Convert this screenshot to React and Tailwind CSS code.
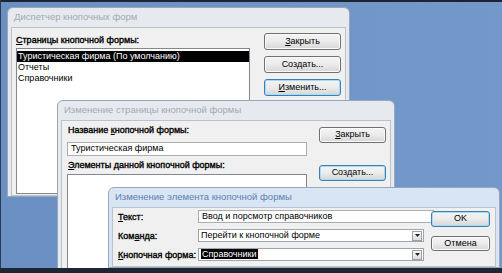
import React from "react";

const F = { fontFamily: '"Liberation Sans", Arial, sans-serif' };

function U({ children }) {
  return <span className="underline">{children}</span>;
}

const LBL = "whitespace-nowrap text-[9px] leading-[13px] text-black [-webkit-text-stroke:0.35px_#000]";

function Btn({ children, focus, className = "" }) {
  return (
    <div
      className={`flex items-center justify-center rounded-[3px] border text-[9px] text-black bg-gradient-to-b from-[#f4f4f4] via-[#ebebeb] to-[#d6d6d6] ${
        focus
          ? "border-[#3c7fb1] shadow-[inset_0_0_0_1px_#a6dcf7]"
          : "border-[#707070] shadow-[inset_0_0_0_1px_#fbfbfb]"
      } ${className}`}
    >
      <span>{children}</span>
    </div>
  );
}

function Win({ title, active, className = "", children }) {
  return (
    <div
      className={`absolute flex flex-col rounded-t-[6px] border border-[#9aa7b8] px-[3px] ${
        active ? "bg-[#d8e5f4]" : "bg-[#e6eaef]"
      } ${className}`}
    >
      <div
        className={`flex h-[19px] shrink-0 items-center whitespace-nowrap pl-[3px] text-[9.5px] ${
          active ? "text-[#5f80ad]" : "text-[#a3a9b1]"
        }`}
      >
        {title}
      </div>
      <div className="flex min-h-0 flex-1 border border-[#b9c3cf] bg-[#f0f0f0]">{children}</div>
    </div>
  );
}

function Dropdown({ children, highlight }) {
  return (
    <div className="flex h-[13px] w-[226px] items-center border border-[#9da5ad] bg-white pl-[2px] pr-[1px]">
      <div className="flex-1 whitespace-nowrap text-[9px] leading-[11px]">
        {highlight ? (
          <span className="bg-black px-[1px] text-white">{children}</span>
        ) : (
          children
        )}
      </div>
      <div className="flex h-[10px] w-[10px] items-center justify-center border border-[#a0a0a0] bg-gradient-to-b from-[#fbfbfb] to-[#dcdcdc]">
        <svg width="5" height="3" viewBox="0 0 5 3">
          <path d="M0 0H5L2.5 3Z" fill="#222" />
        </svg>
      </div>
    </div>
  );
}

export default function App() {
  return (
    <div
      style={F}
      className="relative h-[273px] w-[502px] overflow-hidden bg-gradient-to-r from-[#6a8fc2] via-[#6f95c7] to-[#7299c9]"
    >
      {/* dark edges */}
      <div className="absolute left-0 top-0 h-[2px] w-full bg-[#1d2533]" />
      <div className="absolute left-0 top-0 h-full w-[1px] bg-[#2a3a55]" />

      {/* Dialog 1 */}
      <Win title="Диспетчер кнопочных форм" className="left-[7px] top-[7px] h-[190px] w-[343px]">
        <div className="flex flex-1">
          <div className="flex flex-col pl-[4px] pt-[6px]">
            <div className={`h-[13px] ${LBL}`}>
              <U>С</U>траницы кнопочной формы:
            </div>
            <div className="mt-[1px] flex h-[146px] w-[234px] flex-col border border-[#828790] bg-white pt-[2px] text-[9px] leading-[11px] text-black">
              <div className="bg-black pl-[1px] text-white">Туристическая фирма (По умолчанию)</div>
              <div className="pl-[1px]">Отчеты</div>
              <div className="pl-[1px]">Справочники</div>
            </div>
          </div>
          <div className="ml-[14px] flex flex-col gap-[6px] pt-[5px]">
            <Btn className="h-[17px] w-[77px]">
              <U>З</U>акрыть
            </Btn>
            <Btn className="h-[17px] w-[77px]">
              Соз<U>д</U>ать...
            </Btn>
            <Btn focus className="h-[17px] w-[77px]">
              <U>И</U>зменить...
            </Btn>
          </div>
        </div>
      </Win>

      {/* Dialog 2 */}
      <Win
        title="Изменение страницы кнопочной формы"
        className="left-[57px] top-[100px] h-[190px] w-[338px]"
      >
        <div className="flex flex-1">
          <div className="flex flex-col pl-[5px] pt-[3px]">
            <div className={`h-[13px] pl-[1px] ${LBL}`}>
              Название <U>к</U>нопочной формы:
            </div>
            <div className="mt-[5px] flex h-[14px] w-[240px] items-center border border-[#abadb3] bg-white pl-[3px] text-[9px] text-black">
              Туристическая фирма
            </div>
            <div className={`mt-[3px] h-[13px] pl-[1px] ${LBL}`}>
              <U>Э</U>лементы данной кнопочной формы:
            </div>
            <div className="mt-[2px] h-[120px] w-[240px] border border-[#828790] bg-white" />
          </div>
          <div className="ml-[12px] flex flex-col pt-[6px]">
            <Btn className="h-[16px] w-[67px]">
              <U>З</U>акрыть
            </Btn>
            <Btn focus className="mt-[22px] h-[16px] w-[67px]">
              Соз<U>д</U>ать...
            </Btn>
          </div>
        </div>
      </Win>

      {/* Dialog 3 */}
      <Win
        active
        title="Изменение элемента кнопочной формы"
        className="left-[108px] top-[187px] h-[81px] w-[392px]"
      >
        <div className="flex flex-1 pl-[5px] pt-[2px]">
          <div className={`flex w-[80px] flex-col ${LBL}`}>
            <div className="mt-[1px] h-[13px]">
              <U>Т</U>екст:
            </div>
            <div className="mt-[6px] h-[13px]">
              Ком<U>а</U>нда:
            </div>
            <div className="mt-[6px] h-[13px]">
              <U>К</U>нопочная форма:
            </div>
          </div>
          <div className="flex flex-col gap-[6px]">
            <div className="flex h-[13px] w-[236px] items-center border border-[#abadb3] bg-white pl-[3px] text-[9px] text-black">
              Ввод и порсмотр справочников
            </div>
            <Dropdown>Перейти к кнопочной форме</Dropdown>
            <Dropdown highlight>Справочники</Dropdown>
          </div>
          <div className="ml-[-3px] flex flex-col pt-[1px]">
            <Btn focus className="h-[16px] w-[59px]">
              OK
            </Btn>
            <Btn className="mt-[9px] h-[15px] w-[59px]">Отмена</Btn>
          </div>
        </div>
      </Win>

      <div className="absolute bottom-0 left-0 h-[5px] w-full bg-[#1e2634]" />
    </div>
  );
}
